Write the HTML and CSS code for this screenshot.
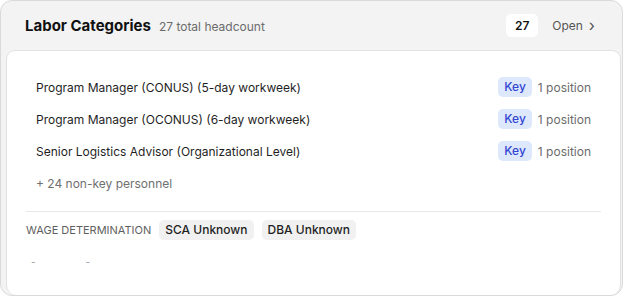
FILE: index.html
```html
<!DOCTYPE html>
<html lang="en">
<head>
  <meta charset="UTF-8">
  <title>Labor Categories</title>
  <link rel="stylesheet" href="styles.css">
</head>
<body>

<div class="panel">
  <div class="panel-head">
    <h2>Labor Categories</h2>
    <span class="sub">27 total headcount</span>
    <span class="count">27</span>
    <a class="open">Open <span class="chev">&#8250;</span></a>
  </div>

  <div class="card">
    <ul class="roles">
      <li><span class="name">Program Manager (CONUS) (5-day workweek)</span><span class="key">Key</span><span class="pos">1 position</span></li>
      <li><span class="name">Program Manager (OCONUS) (6-day workweek)</span><span class="key">Key</span><span class="pos">1 position</span></li>
      <li><span class="name">Senior Logistics Advisor (Organizational Level)</span><span class="key">Key</span><span class="pos">1 position</span></li>
      <li class="more">+ 24 non-key personnel</li>
    </ul>

    <div class="wage">
      <span class="label">Wage Determination</span>
      <span class="chip">SCA Unknown</span>
      <span class="chip">DBA Unknown</span>
    </div>
    <div class="dashes">
      <span>-</span>
      <span>-</span>
    </div>
  </div>
</div>

</body>
</html>
```
FILE: styles.css
```css
body { margin: 0; font-family: Inter, "Noto Sans", sans-serif; color: #1f1f1f; background: #fff; }
.panel {
  width: 623px; height: 296px; box-sizing: border-box;
  background: #f3f3f3; border: 1px solid #dadada; border-radius: 12px;
  display: flex; flex-direction: column;
}
.panel-head {
  height: 49px; display: flex; align-items: center;
  padding: 0 27px 0 24px;
}
.panel-head h2 { margin: 0; font-size: 15px; font-weight: 650; color: #111; }
.sub { margin-left: 8px; font-size: 12px; color: #6b6b6b; flex: 1; padding-top: 2px; }
.count {
  background: #fff; border-radius: 5px; width: 32px; height: 23px;
  display: flex; align-items: center; justify-content: center;
  font-size: 12px; font-weight: 600; color: #111;
}
.open { margin-left: 14px; font-size: 12px; color: #555; display: flex; align-items: center; }
.chev { margin-left: 6px; font-size: 16px; line-height: 1; position: relative; top: -1px; }
.card {
  flex: 1; margin: 0 1px 0 5px;
  background: #fff; border: 1px solid #e2e2e2; border-bottom: 0; border-radius: 9px 9px 10px 10px;
  padding: 20px 19px 0 19px;
}
.roles { list-style: none; margin: 0; padding: 0 10px 12px; border-bottom: 1px solid #e8e8e8; }
.roles li { height: 32px; display: flex; align-items: center; font-size: 12px; }
.name { flex: 1; color: #1f1f1f; }
.key {
  background: #dde8fd; color: #3447d4; border-radius: 5px;
  padding: 0 6px; height: 20px; line-height: 20px; font-size: 12px; font-weight: 500;
}
.pos { margin-left: 6px; color: #6b6b6b; white-space: nowrap; }
.roles li.more { color: #707070; }
.wage { display: flex; align-items: center; height: 35px; }
.label { text-transform: uppercase; font-size: 11px; color: #5f5f5f; margin-right: 8px; }
.chip {
  background: #f1f1f1; border-radius: 5px; height: 20px; line-height: 20px;
  padding: 0 6px; font-size: 12px; font-weight: 500; color: #1f1f1f; margin-right: 8px;
}
.dashes { display: flex; gap: 50px; padding-left: 5px; margin-top: 9px; font-size: 10px; color: #9a9a9a; }
```
